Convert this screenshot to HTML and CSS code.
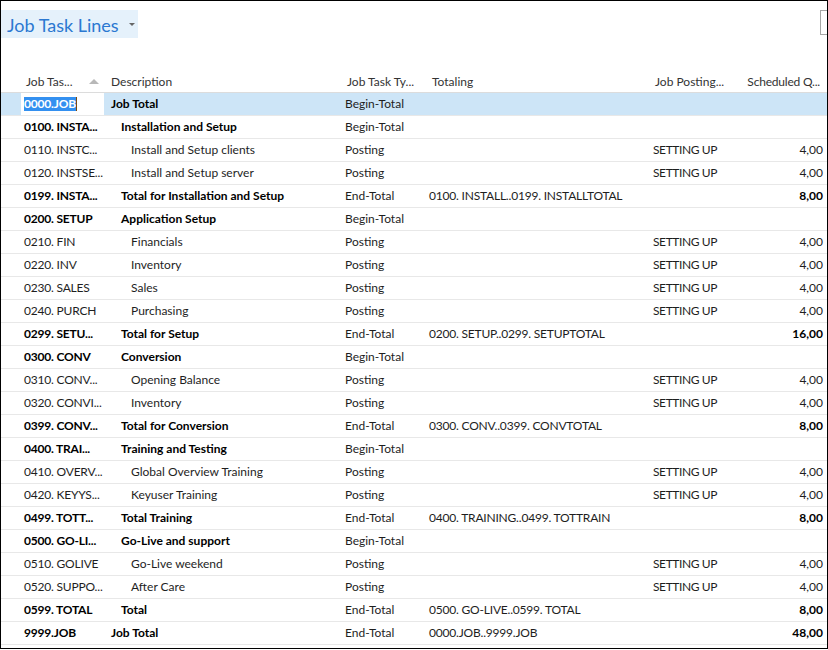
FILE: index.html
```html
<!DOCTYPE html>
<html>
<head>
<meta charset="utf-8">
<link rel="stylesheet" href="styles.css">
</head>
<body>
<div class="frame">
  <div class="search"></div>
  <div class="title"><span class="title-text">Job Task Lines</span><span class="title-caret"></span></div>
  <div class="grid">
    <div class="row head">
      <div class="c gut"></div>
      <div class="c c1 sorted"><span>Job Tas...</span><span class="sort"></span></div>
      <div class="c c2">Description</div>
      <div class="c c3">Job Task Ty...</div>
      <div class="c c4">Totaling</div>
      <div class="c c5">Job Posting...</div>
      <div class="c c6">Scheduled Q...</div>
    </div>
    <div class="row sel b">
      <div class="c gut"></div>
      <div class="c c1 edit"><span class="hl">0000.JOB</span><span class="caret"></span></div>
      <div class="c c2 l0">Job Total</div>
      <div class="c c3">Begin-Total</div>
      <div class="c c4"></div><div class="c c5"></div><div class="c c6"></div>
    </div>
    <div class="row b"><div class="c gut"></div><div class="c c1">0100. INSTA...</div><div class="c c2 l1">Installation and Setup</div><div class="c c3">Begin-Total</div><div class="c c4"></div><div class="c c5"></div><div class="c c6"></div></div>
    <div class="row"><div class="c gut"></div><div class="c c1">0110. INSTC...</div><div class="c c2 l2">Install and Setup clients</div><div class="c c3">Posting</div><div class="c c4"></div><div class="c c5">SETTING UP</div><div class="c c6">4,00</div></div>
    <div class="row"><div class="c gut"></div><div class="c c1">0120. INSTSE...</div><div class="c c2 l2">Install and Setup server</div><div class="c c3">Posting</div><div class="c c4"></div><div class="c c5">SETTING UP</div><div class="c c6">4,00</div></div>
    <div class="row b"><div class="c gut"></div><div class="c c1">0199. INSTA...</div><div class="c c2 l1">Total for Installation and Setup</div><div class="c c3">End-Total</div><div class="c c4">0100. INSTALL..0199. INSTALLTOTAL</div><div class="c c5"></div><div class="c c6">8,00</div></div>
    <div class="row b"><div class="c gut"></div><div class="c c1">0200. SETUP</div><div class="c c2 l1">Application Setup</div><div class="c c3">Begin-Total</div><div class="c c4"></div><div class="c c5"></div><div class="c c6"></div></div>
    <div class="row"><div class="c gut"></div><div class="c c1">0210. FIN</div><div class="c c2 l2">Financials</div><div class="c c3">Posting</div><div class="c c4"></div><div class="c c5">SETTING UP</div><div class="c c6">4,00</div></div>
    <div class="row"><div class="c gut"></div><div class="c c1">0220. INV</div><div class="c c2 l2">Inventory</div><div class="c c3">Posting</div><div class="c c4"></div><div class="c c5">SETTING UP</div><div class="c c6">4,00</div></div>
    <div class="row"><div class="c gut"></div><div class="c c1">0230. SALES</div><div class="c c2 l2">Sales</div><div class="c c3">Posting</div><div class="c c4"></div><div class="c c5">SETTING UP</div><div class="c c6">4,00</div></div>
    <div class="row"><div class="c gut"></div><div class="c c1">0240. PURCH</div><div class="c c2 l2">Purchasing</div><div class="c c3">Posting</div><div class="c c4"></div><div class="c c5">SETTING UP</div><div class="c c6">4,00</div></div>
    <div class="row b"><div class="c gut"></div><div class="c c1">0299. SETU...</div><div class="c c2 l1">Total for Setup</div><div class="c c3">End-Total</div><div class="c c4">0200. SETUP..0299. SETUPTOTAL</div><div class="c c5"></div><div class="c c6">16,00</div></div>
    <div class="row b"><div class="c gut"></div><div class="c c1">0300. CONV</div><div class="c c2 l1">Conversion</div><div class="c c3">Begin-Total</div><div class="c c4"></div><div class="c c5"></div><div class="c c6"></div></div>
    <div class="row"><div class="c gut"></div><div class="c c1">0310. CONV...</div><div class="c c2 l2">Opening Balance</div><div class="c c3">Posting</div><div class="c c4"></div><div class="c c5">SETTING UP</div><div class="c c6">4,00</div></div>
    <div class="row"><div class="c gut"></div><div class="c c1">0320. CONVI...</div><div class="c c2 l2">Inventory</div><div class="c c3">Posting</div><div class="c c4"></div><div class="c c5">SETTING UP</div><div class="c c6">4,00</div></div>
    <div class="row b"><div class="c gut"></div><div class="c c1">0399. CONV...</div><div class="c c2 l1">Total for Conversion</div><div class="c c3">End-Total</div><div class="c c4">0300. CONV..0399. CONVTOTAL</div><div class="c c5"></div><div class="c c6">8,00</div></div>
    <div class="row b"><div class="c gut"></div><div class="c c1">0400. TRAI...</div><div class="c c2 l1">Training and Testing</div><div class="c c3">Begin-Total</div><div class="c c4"></div><div class="c c5"></div><div class="c c6"></div></div>
    <div class="row"><div class="c gut"></div><div class="c c1">0410. OVERV...</div><div class="c c2 l2">Global Overview Training</div><div class="c c3">Posting</div><div class="c c4"></div><div class="c c5">SETTING UP</div><div class="c c6">4,00</div></div>
    <div class="row"><div class="c gut"></div><div class="c c1">0420. KEYYS...</div><div class="c c2 l2">Keyuser Training</div><div class="c c3">Posting</div><div class="c c4"></div><div class="c c5">SETTING UP</div><div class="c c6">4,00</div></div>
    <div class="row b"><div class="c gut"></div><div class="c c1">0499. TOTT...</div><div class="c c2 l1">Total Training</div><div class="c c3">End-Total</div><div class="c c4">0400. TRAINING..0499. TOTTRAIN</div><div class="c c5"></div><div class="c c6">8,00</div></div>
    <div class="row b"><div class="c gut"></div><div class="c c1">0500. GO-LI...</div><div class="c c2 l1">Go-Live and support</div><div class="c c3">Begin-Total</div><div class="c c4"></div><div class="c c5"></div><div class="c c6"></div></div>
    <div class="row"><div class="c gut"></div><div class="c c1">0510. GOLIVE</div><div class="c c2 l2">Go-Live weekend</div><div class="c c3">Posting</div><div class="c c4"></div><div class="c c5">SETTING UP</div><div class="c c6">4,00</div></div>
    <div class="row"><div class="c gut"></div><div class="c c1">0520. SUPPO...</div><div class="c c2 l2">After Care</div><div class="c c3">Posting</div><div class="c c4"></div><div class="c c5">SETTING UP</div><div class="c c6">4,00</div></div>
    <div class="row b"><div class="c gut"></div><div class="c c1">0599. TOTAL</div><div class="c c2 l1">Total</div><div class="c c3">End-Total</div><div class="c c4">0500. GO-LIVE..0599. TOTAL</div><div class="c c5"></div><div class="c c6">8,00</div></div>
    <div class="row b"><div class="c gut"></div><div class="c c1">9999.JOB</div><div class="c c2 l0">Job Total</div><div class="c c3">End-Total</div><div class="c c4">0000.JOB..9999.JOB</div><div class="c c5"></div><div class="c c6">48,00</div></div>
  </div>
</div>
</body>
</html>
```

FILE: styles.css
```css
html, body {
  margin: 0;
  padding: 0;
  background: #ffffff;
}
.frame {
  position: relative;
  box-sizing: border-box;
  width: 828px;
  height: 649px;
  border: 1px solid #000000;
  overflow: hidden;
  font-family: "Lato", "Liberation Sans", sans-serif;
  font-size: 12px;
  color: #1e1e1e;
}
.search {
  position: absolute;
  top: 9px;
  left: 819px;
  width: 30px;
  height: 23px;
  border: 1px solid #a6a6a6;
}
.title {
  margin-top: 9px;
  width: 137px;
  height: 28px;
  background: #e5f1fb;
  display: flex;
  align-items: center;
  box-sizing: border-box;
  padding-left: 6px;
  padding-top: 1px;
}
.title-text {
  font-size: 18px;
  color: #2b78d1;
  line-height: 26px;
}
.title-caret {
  margin-left: 10px;
  margin-top: 0;
  width: 0;
  height: 0;
  border-left: 3px solid transparent;
  border-right: 3px solid transparent;
  border-top: 3px solid #666666;
}
.grid {
  margin-top: 33px;
}
.row {
  display: grid;
  grid-template-columns: 20px 83px 238px 84px 224px 86px 1fr;
  height: 23px;
  box-sizing: border-box;
  border-bottom: 1px solid #e8e8e8;
  align-items: center;
  white-space: nowrap;
}
.row.head {
  height: 22px;
  border-bottom: 1px solid #dcdcdc;
  color: #333333;
}
.c {
  height: 100%;
  display: flex;
  align-items: center;
  box-sizing: border-box;
  padding-left: 3px;
  padding-bottom: 1px;
  overflow: hidden;
}
.head .c { padding-left: 5px; padding-bottom: 0; }
.head .c2 { padding-left: 7px; }
.head .c4 { padding-left: 6px; }
.head .c6 { justify-content: flex-end; padding-right: 7px; letter-spacing: -0.2px; }
.c1 { letter-spacing: -0.2px; }
.c4 { letter-spacing: -0.2px; }
.c5 { letter-spacing: -0.4px; }
.head .c1, .head .c4, .head .c5 { letter-spacing: 0; }
.c2 { padding-left: 7px; }
.c2.l1 { padding-left: 17px; }
.c2.l2 { padding-left: 27px; }
.c6 { justify-content: flex-end; padding-right: 4px; }
.b .c1, .b .c2, .b .c6 { font-weight: 700; color: #000000; }
.sort {
  margin-left: auto;
  margin-right: 5px;
  width: 0;
  height: 0;
  border-left: 5px solid transparent;
  border-right: 5px solid transparent;
  border-bottom: 5px solid #b8b8b8;
}
.sel { background: #cde5f7; }
.sel .edit { background: #ffffff; }
.hl {
  background: #3390f0;
  color: #ffffff;
  line-height: 14px;
}
.caret {
  width: 1px;
  height: 14px;
  background: #7a4a10;
}
```
